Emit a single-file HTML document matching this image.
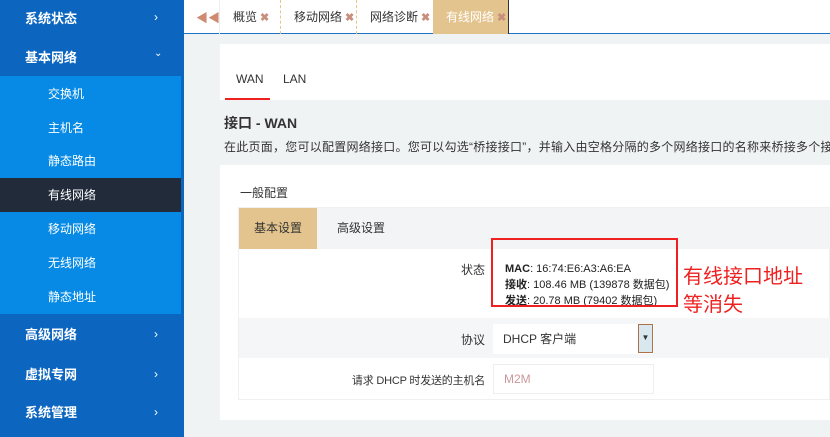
<!DOCTYPE html>
<html><head><meta charset="utf-8"><style>
*{margin:0;padding:0;box-sizing:border-box}
body{width:830px;height:437px;overflow:hidden;background:#f0f3f4;font-family:"Liberation Sans","Noto Sans CJK SC",sans-serif;color:#333;position:relative;font-size:12px}
.a{position:absolute}
.side{left:0;top:0;width:184px;height:437px;background:#0c66c0}
.top{color:#fff;font-weight:bold;font-size:13px;left:25px}
.arr{color:#fff;left:154px;font-size:12px;line-height:16px}
.sub{left:0;top:76px;width:181px;height:238px;background:#068ae6}
.si{color:#fff;font-size:12px;left:48px}
.sel{left:0;top:178px;width:181px;height:34px;background:#222b3a}
.tabbar{left:184px;top:0;width:646px;height:34px;background:#fff;border-bottom:1px solid #1a73c6}
.tab{top:0;height:34px;line-height:34px;font-size:12px;color:#333}
.x{color:#c98f7e;font-weight:bold;font-size:11px;margin-left:3px}
.lbl{right:345px;text-align:right;white-space:nowrap}
</style></head><body>
<div class="a side"></div>
<div class="a top" style="top:8px">系统状态</div><div class="a arr" style="top:9px">›</div>
<div class="a top" style="top:47px">基本网络</div><div class="a arr" style="top:46px;font-size:10px">⌄</div>
<div class="a sub"></div>
<div class="a sel"></div>
<div class="a si" style="top:85px">交换机</div>
<div class="a si" style="top:119px">主机名</div>
<div class="a si" style="top:152px">静态路由</div>
<div class="a si" style="top:186px">有线网络</div>
<div class="a si" style="top:220px">移动网络</div>
<div class="a si" style="top:254px">无线网络</div>
<div class="a si" style="top:288px">静态地址</div>
<div class="a top" style="top:324px">高级网络</div><div class="a arr" style="top:326px">›</div>
<div class="a top" style="top:364px">虚拟专网</div><div class="a arr" style="top:366px">›</div>
<div class="a top" style="top:402px">系统管理</div><div class="a arr" style="top:404px">›</div>

<div class="a tabbar"></div>
<div class="a" style="left:196px;top:9px;color:#d08a70;font-size:12px;font-weight:bold">◀◀</div>
<div class="a" style="left:219px;top:0;width:1px;height:34px;background:#eee"></div>
<div class="a tab" style="left:233px">概览<span class="x">✖</span></div>
<div class="a" style="left:280px;top:0;height:34px;border-left:1px dashed #e8c48a"></div>
<div class="a tab" style="left:294px">移动网络<span class="x">✖</span></div>
<div class="a" style="left:356px;top:0;height:34px;border-left:1px dashed #e8c48a"></div>
<div class="a tab" style="left:370px">网络诊断<span class="x">✖</span></div>
<div class="a tab" style="left:433px;width:75px;background:#e4c48e;color:#fff;padding-left:13px">有线网络<span class="x">✖</span></div>
<div class="a" style="left:508px;top:0;width:1px;height:34px;background:#333"></div>

<div class="a" style="left:220px;top:44px;width:610px;height:56px;background:#fff"></div>
<div class="a" style="left:236px;top:72px;font-size:12px">WAN</div>
<div class="a" style="left:283px;top:72px;font-size:12px">LAN</div>
<div class="a" style="left:225px;top:98px;width:45px;height:2px;background:#f02020"></div>
<div class="a" style="left:224px;top:113px;font-size:14px;font-weight:bold">接口 - WAN</div>
<div class="a" style="left:224px;top:138px;font-size:12px;white-space:nowrap;letter-spacing:0.25px">在此页面，您可以配置网络接口。您可以勾选“桥接接口”，并输入由空格分隔的多个网络接口的名称来桥接多个接口。接</div>

<div class="a" style="left:220px;top:165px;width:610px;height:255px;background:#fff"></div>
<div class="a" style="left:240px;top:184px;font-size:12px">一般配置</div>
<div class="a" style="left:238px;top:207px;width:592px;height:193px;border:1px solid #eef0f1;background:#fff"></div>
<div class="a" style="left:239px;top:208px;width:591px;height:41px;background:#f2f4f5"></div>
<div class="a" style="left:239px;top:208px;width:78px;height:41px;background:#e4c48e;line-height:41px;text-align:center">基本设置</div>
<div class="a" style="left:337px;top:208px;line-height:41px">高级设置</div>
<div class="a" style="left:239px;top:318px;width:591px;height:40px;background:#f4f6f7"></div>
<div class="a lbl" style="top:261px">状态</div>
<div class="a" style="left:505px;top:261px;font-size:11px;line-height:16px;color:#222"><b>MAC</b>: 16:74:E6:A3:A6:EA<br><b>接收</b>: 108.46 MB (139878 数据包)<br><b>发送</b>: 20.78 MB (79402 数据包)</div>
<div class="a" style="left:491px;top:238px;width:187px;height:69px;border:2px solid #ef2020"></div>
<div class="a" style="left:683px;top:263px;color:#ef2020;font-size:20px;line-height:28px">有线接口地址<br>等消失</div>
<div class="a lbl" style="top:331px">协议</div>
<div class="a" style="left:493px;top:324px;width:161px;height:30px;background:#fff;line-height:30px;padding-left:10px">DHCP 客户端</div>
<div class="a" style="left:638px;top:324px;width:15px;height:29px;border:1px solid #b07048;background:#d8e8ee;text-align:center;font-size:8px;line-height:26px">▼</div>
<div class="a lbl" style="top:372px;font-size:11px;letter-spacing:-0.2px">请求 DHCP 时发送的主机名</div>
<div class="a" style="left:493px;top:364px;width:161px;height:30px;border:1px solid #eee;line-height:28px;padding-left:10px;color:#c99">M2M</div>
</body></html>
